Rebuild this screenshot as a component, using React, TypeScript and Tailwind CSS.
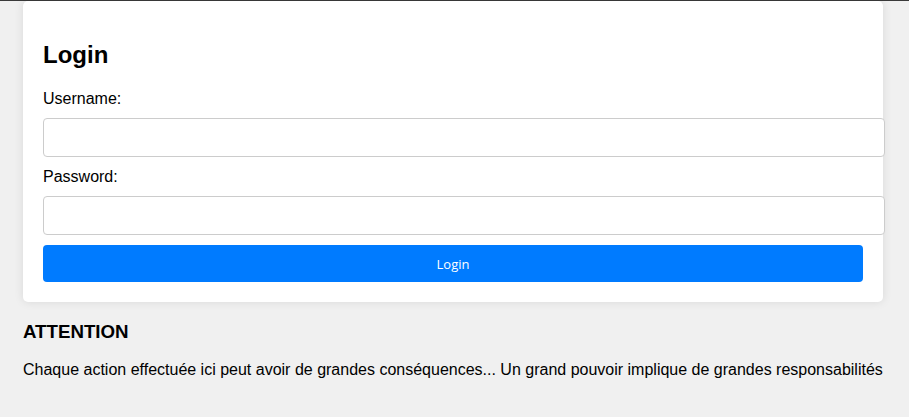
import React, { useState } from "react";

const App: React.FC = () => {
  const [username, setUsername] = useState("");
  const [password, setPassword] = useState("");

  return (
    <div className="min-h-[417px] bg-[#f0f0f0] font-['Liberation_Sans',Arial,sans-serif] text-black">
      {/* thin dark strip at the very top */}
      <div className="h-px bg-[#3a3a3a]" />

      <div className="ml-[23px] w-[860px]">
        {/* Login card */}
        <div className="rounded-[5px] bg-white px-[20px] pt-[20px] pb-[20px] shadow-[0_0_10px_rgba(0,0,0,0.1)]">
          <h2 className="my-[20px] text-[24px] font-bold leading-[27px]">Login</h2>
          <form onSubmit={(e) => e.preventDefault()}>
            <label className="mb-[8px] block text-[16px] leading-[22px]">Username:</label>
            <input
              type="text"
              value={username}
              onChange={(e) => setUsername(e.target.value)}
              className="mb-[9px] block h-[39px] w-[842px] rounded-[4px] border border-[#cccccc] bg-white px-[10px] outline-none"
            />
            <label className="mb-[8px] block text-[16px] leading-[22px]">Password:</label>
            <input
              type="password"
              value={password}
              onChange={(e) => setPassword(e.target.value)}
              className="mb-[10px] block h-[39px] w-[842px] rounded-[4px] border border-[#cccccc] bg-white px-[10px] outline-none"
            />
            <button
              type="submit"
              className="block h-[37px] w-full rounded-[4px] bg-[#007bff] pt-[2px] font-['Open_Sans','Noto_Sans',sans-serif] text-[13px] text-white"
            >
              Login
            </button>
          </form>
        </div>

        {/* Warning */}
        <h3 className="mt-[19px] mb-[19px] text-[18.72px] font-bold leading-[21px]">ATTENTION</h3>
        <p className="text-[16px] leading-[18px]">
          Chaque action effectuée ici peut avoir de grandes conséquences... Un grand pouvoir implique de grandes responsabilités
        </p>
      </div>
    </div>
  );
};

export default App;
